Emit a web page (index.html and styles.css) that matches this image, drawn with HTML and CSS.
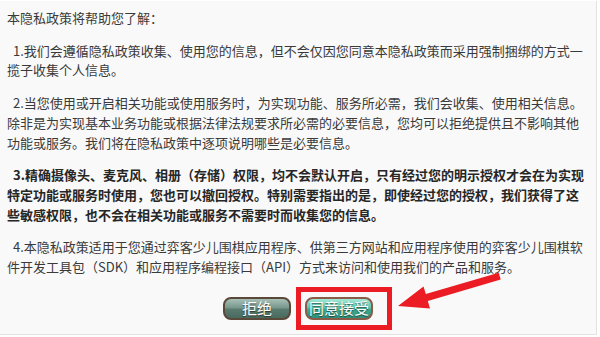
FILE: index.html
```html
<!DOCTYPE html>
<html lang="zh-CN">
<head>
  <meta charset="UTF-8">
  <meta name="viewport" content="width=device-width, initial-scale=1.0">
  <title>隐私政策</title>
  <link rel="stylesheet" href="styles.css">
</head>
<body>

  <!-- Privacy dialog -->
  <div class="panel">
    <div class="policy-title">本隐私政策将帮助您了解：</div>
    <p class="policy-item">1.我们会遵循隐私政策收集、使用您的信息，但不会仅因您同意本隐私政策而采用强制捆绑的方式一揽子收集个人信息。</p>
    <p class="policy-item">2.当您使用或开启相关功能或使用服务时，为实现功能、服务所必需，我们会收集、使用相关信息。除非是为实现基本业务功能或根据法律法规要求所必需的必要信息，您均可以拒绝提供且不影响其他功能或服务。我们将在隐私政策中逐项说明哪些是必要信息。</p>
    <p class="policy-item strong">3.精确摄像头、麦克风、相册（存储）权限，均不会默认开启，只有经过您的明示授权才会在为实现特定功能或服务时使用，您也可以撤回授权。特别需要指出的是，即使经过您的授权，我们获得了这些敏感权限，也不会在相关功能或服务不需要时而收集您的信息。</p>
    <p class="policy-item">4.本隐私政策适用于您通过弈客少儿围棋应用程序、供第三方网站和应用程序使用的弈客少儿围棋软件开发工具包（SDK）和应用程序编程接口（API）方式来访问和使用我们的产品和服务。</p>

    <div class="actions">
      <button class="btn btn-refuse">拒绝</button>
      <button class="btn btn-agree">同意接受</button>
    </div>
  </div>

  <!-- Annotation overlay -->
  <svg class="markup" width="600" height="337" viewBox="0 0 600 337">
    <rect x="298.5" y="289.5" width="91" height="38" fill="none" stroke="#ec1c24" stroke-width="5"/>
    <polygon fill="#ec1c24" points="398,306 430,308.5 427.8,300.9 500.7,279.5 498.7,272.7 425.8,294.1 423.5,286.5"/>
  </svg>

</body>
</html>
```

FILE: styles.css
```css
body {
  margin: 0;
  background-color: #ffffff;
  font-family: "Noto Sans CJK SC", "Noto Sans", sans-serif;
  font-size: 13px;
  color: #3a3a3a;
  position: relative;
  width: 600px;
  height: 337px;
  overflow: hidden;
}
.panel {
  margin-top: 1px;
  width: 589px;
  height: 326px;
  padding: 7px 0 0 7px;
  background-color: #f9f9f9;
  border-right: 1px solid #e2e2e2;
  border-bottom: 1px solid #e2e2e2;
}
.policy-title {
  line-height: 19.7px;
  width: 582px;
}
.policy-item {
  margin: 13px 0 0 0;
  width: 582px;
  line-height: 19.7px;
  text-indent: 6px;
}
.policy-item.strong {
  font-weight: bold;
  color: #262626;
}
.actions {
  display: flex;
  justify-content: center;
  gap: 14px;
  margin-top: 20px;
  padding-right: 7px;
}
.btn {
  width: 68px;
  height: 23px;
  padding: 0;
  border-radius: 8px;
  font-family: "Noto Sans CJK SC", sans-serif;
  font-size: 15px;
  line-height: 18px;
  color: #ffffff;
  text-shadow: 0 1px 1px rgba(0, 0, 0, 0.55);
  cursor: pointer;
}
.btn-refuse {
  border: 2px solid #5a4838;
  background: linear-gradient(#a7c0b7 0%, #7a988d 45%, #587a6e 55%, #4a6a5f 100%);
}
.btn-agree {
  border: 2px solid #8b5b48;
  background: linear-gradient(#a3ead8 0%, #5cc7ad 45%, #3daa90 55%, #2f907a 100%);
}
.markup {
  position: absolute;
  left: 0;
  top: 0;
  pointer-events: none;
}
```
